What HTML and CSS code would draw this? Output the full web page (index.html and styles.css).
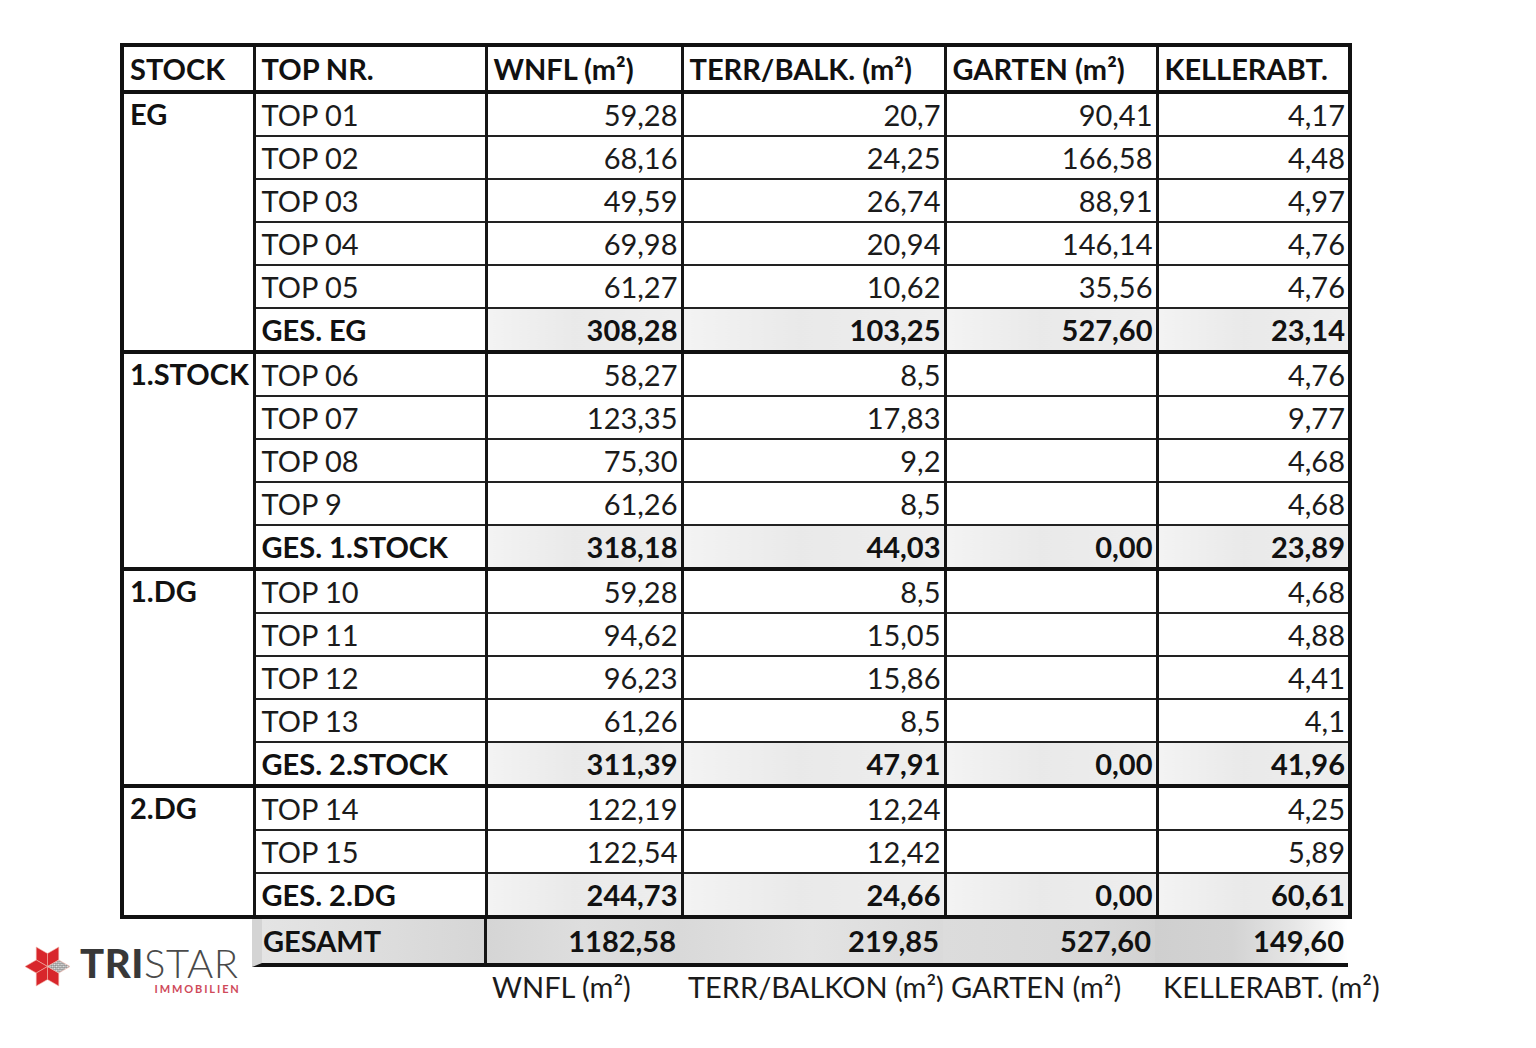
FILE: index.html
```html
<!DOCTYPE html>
<html lang="de">
<head>
<meta charset="utf-8">
<title>Flächenaufstellung</title>
<link rel="stylesheet" href="styles.css">
</head>
<body>
<div class="sheet">
  <table class="plan">
    <colgroup>
      <col class="c-stock"><col class="c-top"><col class="c-wnfl"><col class="c-terr"><col class="c-garten"><col class="c-keller">
    </colgroup>
    <thead>
      <tr class="head"><th>STOCK</th><th>TOP NR.</th><th>WNFL (m²)</th><th>TERR/BALK. (m²)</th><th>GARTEN (m²)</th><th>KELLERABT.</th></tr>
    </thead>
    <tbody>
      <tr><td class="stock" rowspan="6">EG</td><td>TOP 01</td><td class="num">59,28</td><td class="num">20,7</td><td class="num">90,41</td><td class="num">4,17</td></tr>
      <tr><td>TOP 02</td><td class="num">68,16</td><td class="num">24,25</td><td class="num">166,58</td><td class="num">4,48</td></tr>
      <tr><td>TOP 03</td><td class="num">49,59</td><td class="num">26,74</td><td class="num">88,91</td><td class="num">4,97</td></tr>
      <tr><td>TOP 04</td><td class="num">69,98</td><td class="num">20,94</td><td class="num">146,14</td><td class="num">4,76</td></tr>
      <tr><td>TOP 05</td><td class="num">61,27</td><td class="num">10,62</td><td class="num">35,56</td><td class="num">4,76</td></tr>
      <tr class="sub"><td>GES. EG</td><td class="num">308,28</td><td class="num">103,25</td><td class="num">527,60</td><td class="num">23,14</td></tr>

      <tr><td class="stock" rowspan="5">1.STOCK</td><td>TOP 06</td><td class="num">58,27</td><td class="num">8,5</td><td class="num"></td><td class="num">4,76</td></tr>
      <tr><td>TOP 07</td><td class="num">123,35</td><td class="num">17,83</td><td class="num"></td><td class="num">9,77</td></tr>
      <tr><td>TOP 08</td><td class="num">75,30</td><td class="num">9,2</td><td class="num"></td><td class="num">4,68</td></tr>
      <tr><td>TOP 9</td><td class="num">61,26</td><td class="num">8,5</td><td class="num"></td><td class="num">4,68</td></tr>
      <tr class="sub"><td>GES. 1.STOCK</td><td class="num">318,18</td><td class="num">44,03</td><td class="num">0,00</td><td class="num">23,89</td></tr>

      <tr><td class="stock" rowspan="5">1.DG</td><td>TOP 10</td><td class="num">59,28</td><td class="num">8,5</td><td class="num"></td><td class="num">4,68</td></tr>
      <tr><td>TOP 11</td><td class="num">94,62</td><td class="num">15,05</td><td class="num"></td><td class="num">4,88</td></tr>
      <tr><td>TOP 12</td><td class="num">96,23</td><td class="num">15,86</td><td class="num"></td><td class="num">4,41</td></tr>
      <tr><td>TOP 13</td><td class="num">61,26</td><td class="num">8,5</td><td class="num"></td><td class="num">4,1</td></tr>
      <tr class="sub"><td>GES. 2.STOCK</td><td class="num">311,39</td><td class="num">47,91</td><td class="num">0,00</td><td class="num">41,96</td></tr>

      <tr><td class="stock" rowspan="3">2.DG</td><td>TOP 14</td><td class="num">122,19</td><td class="num">12,24</td><td class="num"></td><td class="num">4,25</td></tr>
      <tr><td>TOP 15</td><td class="num">122,54</td><td class="num">12,42</td><td class="num"></td><td class="num">5,89</td></tr>
      <tr class="sub"><td>GES. 2.DG</td><td class="num">244,73</td><td class="num">24,66</td><td class="num">0,00</td><td class="num">60,61</td></tr>
    </tbody>
  </table>

  <div class="logo">
    <svg class="star" viewBox="0 0 48 48" width="47" height="47" aria-hidden="true">
      <defs>
        <pattern id="chk" width="3" height="3" patternUnits="userSpaceOnUse" patternTransform="rotate(45 24 24)">
          <rect width="3" height="3" fill="#e2e2e2"/>
          <rect width="1.5" height="1.5" fill="#7d7d7d"/>
          <rect x="1.5" y="1.5" width="1.5" height="1.5" fill="#7d7d7d"/>
        </pattern>
      </defs>
      <g fill="#d8262b" stroke="#f3b3a8" stroke-width="0.6" stroke-linejoin="round">
        <polygon points="24,24 12.5,17.36 12.5,4.08 24,10.72"/>
        <polygon points="24,24 24,10.72 35.5,4.08 35.5,17.36"/>
        <polygon points="24,24 12.5,30.64 1,24 12.5,17.36"/>
        <polygon points="24,24 24,37.28 12.5,43.92 12.5,30.64"/>
        <polygon points="24,24 35.5,30.64 35.5,43.92 24,37.28"/>
      </g>
      <polygon points="24,24 35.5,17.36 47,24 35.5,30.64" fill="url(#chk)" stroke="#f3b3a8" stroke-width="0.6"/>
    </svg>
    <div class="brand">
      <div class="brand-name"><span class="tri">TRI</span><span class="star-word">STAR</span></div>
      <div class="brand-sub">IMMOBILIEN</div>
    </div>
  </div>

  <div class="total-label">GESAMT</div>
  <div class="total t-wnfl">1182,58</div>
  <div class="total t-terr">219,85</div>
  <div class="total t-garten">527,60</div>
  <div class="total t-keller">149,60</div>

  <div class="foot f-wnfl">WNFL (m²)</div>
  <div class="foot f-terr">TERR/BALKON (m²)</div>
  <div class="foot f-garten">GARTEN (m²)</div>
  <div class="foot f-keller">KELLERABT. (m²)</div>
</div>
</body>
</html>
```

FILE: styles.css
```css
html, body {
  margin: 0;
  padding: 0;
  background: #ffffff;
}

body {
  font-family: Lato, "Open Sans", "Liberation Sans", sans-serif;
  color: #1b1b1b;
}

.sheet {
  display: grid;
  grid-template-columns: 120px 132px 232px 196px 263px 212px 193px;
  grid-template-rows: auto 48px 42px;
  padding-top: 43px;
}

/* ---------- main table ---------- */
.plan {
  grid-column: 2 / 8;
  grid-row: 1;
  width: 1228px;
  border-collapse: collapse;
  table-layout: fixed;
  border: 4px solid #111;
  font-size: 29px;
}

.c-stock { width: 132px; }
.c-top { width: 232px; }
.c-wnfl { width: 196px; }
.c-terr { width: 263px; }
.c-garten { width: 212px; }
.c-keller { width: 193px; }

.plan th,
.plan td {
  border-top: 2px solid #222;
  border-bottom: 2px solid #222;
  border-left: 3px solid #151515;
  border-right: 3px solid #151515;
  padding: 0 4px 0 6px;
  height: 41px;
  line-height: 40px;
  white-space: nowrap;
  overflow: visible;
  vertical-align: middle;
}

.plan th {
  font-weight: 700;
  text-align: left;
  height: 43px;
  color: #111;
  border-bottom: 4px solid #111;
}

.plan td.num {
  text-align: right;
  padding-right: 3px;
}

.plan td.stock {
  vertical-align: top;
  font-weight: 700;
  border-bottom: 4px solid #111;
  padding-top: 0;
  color: #111;
}

.plan tr.sub td {
  font-weight: 700;
  color: #111;
  border-bottom: 4px solid #111;
}

.plan tr.sub td.num {
  background: linear-gradient(90deg, #f3f3f3 0%, #e9e9e9 45%, #eeeeee 100%);
}

/* ---------- logo ---------- */
.logo {
  grid-column: 1 / 3;
  grid-row: 2 / 4;
  align-self: start;
  display: flex;
  align-items: center;
  gap: 9px;
  padding-left: 24px;
  padding-top: 19px;
}

.star {
  display: block;
  flex: none;
}

.brand {
  display: flex;
  flex-direction: column;
  align-items: flex-end;
  padding-top: 2px;
}

.brand-name {
  font-size: 40px;
  line-height: 46px;
  color: #3a3a3a;
  letter-spacing: 0.6px;
}

.tri {
  font-weight: 900;
  color: #383838;
}

.star-word {
  font-weight: 300;
  color: #4a4a4a;
}

.brand-sub {
  font-size: 11px;
  line-height: 12px;
  letter-spacing: 1.9px;
  color: #cf4a5a;
  font-weight: 700;
  margin-right: -2px;
  margin-top: -3px;
}

/* ---------- grand total row ---------- */
.total-label,
.total {
  grid-row: 2;
  font-size: 29px;
  font-weight: 700;
  color: #111;
  line-height: 44px;
  border-bottom: 4px solid #111;
  white-space: nowrap;
}

.total-label {
  grid-column: 3;
  border-left: 10px solid #d4d4d4;
  padding-left: 1px;
  background: linear-gradient(90deg, #e4e4e4 0%, #dcdcdc 60%, #d6d6d6 100%);
}

.total {
  text-align: right;
  padding-right: 4px;
}

.t-wnfl {
  grid-column: 4;
  border-left: 3px solid #151515;
  background: linear-gradient(90deg, #d5d5d5 0%, #dedede 50%, #d8d8d8 100%);
}

.t-terr {
  grid-column: 5;
  background: linear-gradient(90deg, #d9d9d9 0%, #e3e3e3 50%, #dadada 100%);
}

.t-garten {
  grid-column: 6;
  background: linear-gradient(90deg, #dcdcdc 0%, #d8d8d8 70%, #d2d2d2 100%);
}

.t-keller {
  grid-column: 7;
  background: linear-gradient(90deg, #cfcfcf 0%, #d3d3d3 40%, #e6e6e6 72%, #ffffff 100%);
}

/* ---------- footer labels ---------- */
.foot {
  grid-row: 3;
  font-size: 29px;
  line-height: 40px;
  padding-top: 0;
  padding-left: 8px;
  white-space: nowrap;
  color: #1b1b1b;
}

.f-wnfl { grid-column: 4; }
.f-terr { grid-column: 5; }
.f-garten { grid-column: 6; }
.f-keller { grid-column: 7; }
```
